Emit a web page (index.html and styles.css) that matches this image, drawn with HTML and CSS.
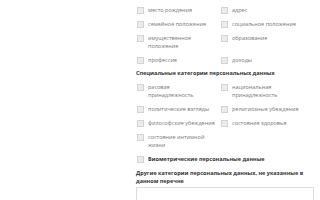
FILE: index.html
```html
<!DOCTYPE html>
<html lang="ru">
<head>
    <meta charset="UTF-8">
    <title>Категории персональных данных</title>
    <link rel="stylesheet" href="styles.css">
</head>
<body>
    <div class="form-section">
        <div class="check-grid">
            <label class="check-item"><span class="box"></span><span>место рождения</span></label>
            <label class="check-item"><span class="box"></span><span>адрес</span></label>
            <label class="check-item"><span class="box"></span><span>семейное положение</span></label>
            <label class="check-item"><span class="box"></span><span>социальное положение</span></label>
            <label class="check-item"><span class="box"></span><span>имущественное положение</span></label>
            <label class="check-item"><span class="box"></span><span>образование</span></label>
            <label class="check-item"><span class="box"></span><span>профессия</span></label>
            <label class="check-item"><span class="box"></span><span>доходы</span></label>
        </div>

        <div class="section-title">Специальные категории персональных данных</div>
        <div class="check-grid">
            <label class="check-item"><span class="box"></span><span>расовая принадлежность</span></label>
            <label class="check-item"><span class="box"></span><span>национальная принадлежность</span></label>
            <label class="check-item"><span class="box"></span><span>политические взгляды</span></label>
            <label class="check-item"><span class="box"></span><span>религиозные убеждения</span></label>
            <label class="check-item"><span class="box"></span><span>философские убеждения</span></label>
            <label class="check-item"><span class="box"></span><span>состояние здоровья</span></label>
            <label class="check-item"><span class="box"></span><span>состояние интимной жизни</span></label>
        </div>

        <label class="check-item bold-item"><span class="box"></span><span>Биометрические персональные данные</span></label>

        <div class="section-title other-title">Другие категории персональных данных, не указанные в данном перечне</div>
        <div class="text-box"></div>
    </div>
</body>
</html>
```

FILE: styles.css
```css
body {
    margin: 0;
    background-color: #fff;
    font-family: "Open Sans", "DejaVu Sans", sans-serif;
    color: #777;
}
.form-section {
    width: 180px;
    margin-left: 136px;
    padding-top: 6px;
    font-size: 5.5px;
    line-height: 8px;
}
.check-grid {
    display: grid;
    grid-template-columns: 84px 94px;
    row-gap: 6px;
}
.check-item {
    display: flex;
    align-items: flex-start;
    padding-left: 1px;
}
.check-item span:last-child {
    padding-right: 4.5px;
}
.box {
    flex: none;
    width: 5px;
    height: 5px;
    margin: 1px 4px 0 0;
    background-color: #ececec;
    border: 0.5px solid #d4d4d4;
}
.section-title {
    margin: 5px 0 6px;
    font-weight: bold;
    color: #333;
}
.bold-item {
    margin-top: 6px;
    font-weight: bold;
    color: #333;
}
.other-title {
    margin: 6px 0 2px;
}
.text-box {
    width: 176px;
    height: 30px;
    border: 1px solid #ddd;
}
```
